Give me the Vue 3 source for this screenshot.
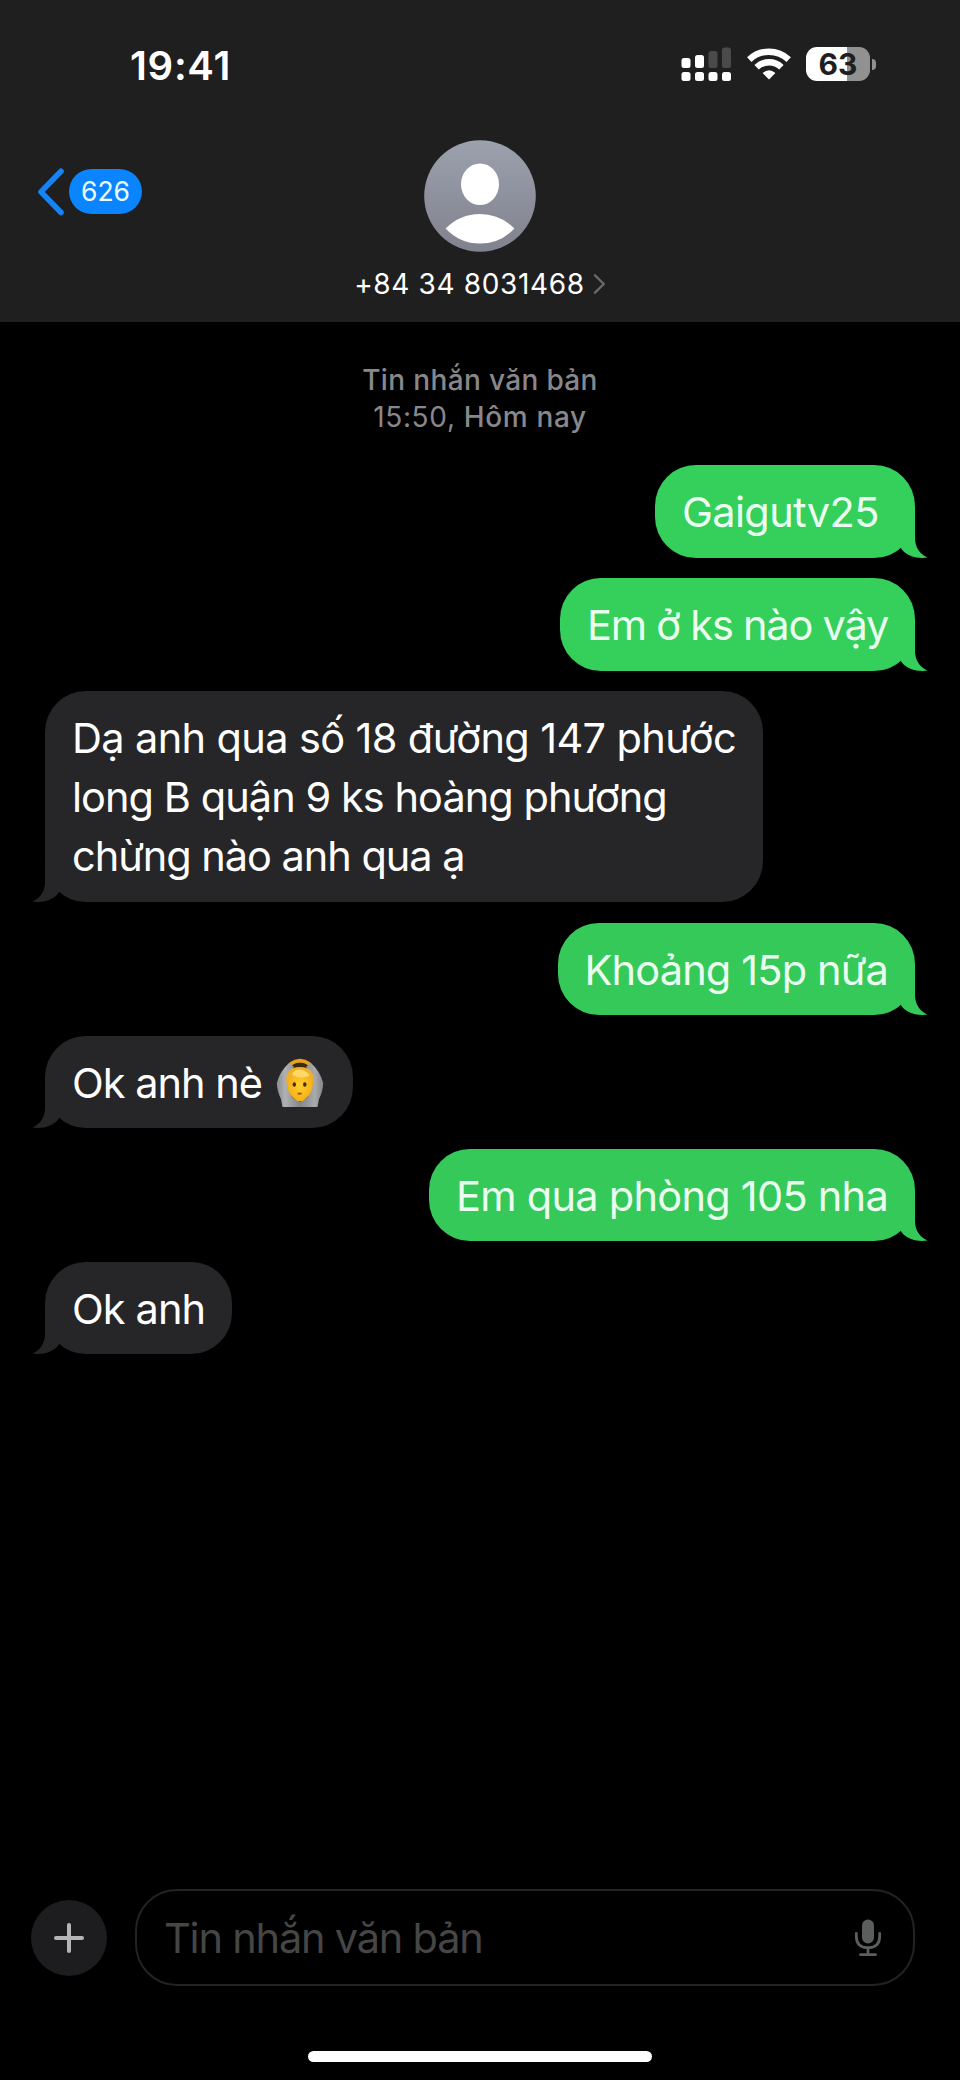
<script setup>
// `track` is the letter spacing of a line, in pixels
const messages = [
  { id: 1, side: 'out', tone: 'bright', roomy: true, lines: [{ text: 'Gaigutv25', track: -0.65 }] },
  { id: 2, side: 'out', tone: 'bright', lines: [{ text: 'Em ở ks nào vậy', track: -1.22 }] },
  {
    id: 3,
    side: 'in',
    lines: [
      { text: 'Dạ anh qua số 18 đường 147 phước', track: -0.63 },
      { text: 'long B quận 9 ks hoàng phương', track: -0.95 },
      { text: 'chừng nào anh qua ạ', track: -1.04 }
    ]
  },
  { id: 4, side: 'out', tone: 'deep', lines: [{ text: 'Khoảng 15p nữa', track: -0.85 }] },
  { id: 5, side: 'in', emoji: true, lines: [{ text: 'Ok anh nè', track: -1 }] },
  { id: 6, side: 'out', tone: 'deep', lines: [{ text: 'Em qua phòng 105 nha', track: -0.74 }] },
  { id: 7, side: 'in', lines: [{ text: 'Ok anh', track: -0.9 }] }
]
</script>

<template>
  <div class="phone">
    <header class="header">
      <div class="status">
        <span class="clock">19:41</span>
        <div class="indicators">
          <svg class="signal" width="50" height="34" viewBox="0 0 50 34">
            <g fill="#fff">
              <rect x="0.5" y="11" width="9" height="10" rx="2.5" />
              <rect x="14" y="8" width="9" height="13" rx="2.5" />
              <rect x="0.5" y="25" width="9" height="9" rx="2.5" />
              <rect x="14" y="25" width="9" height="9" rx="2.5" />
              <rect x="27.5" y="25" width="9" height="9" rx="2.5" />
              <rect x="41" y="25" width="9" height="9" rx="2.5" />
            </g>
            <g fill="#4a4a4a">
              <rect x="27.5" y="4" width="9" height="17" rx="2.5" />
              <rect x="41" y="0.5" width="9" height="20.5" rx="2.5" />
            </g>
          </svg>
          <svg class="wifi" width="44" height="32" viewBox="0 0 44 32">
            <g fill="none" stroke="#fff" stroke-width="6.4">
              <path d="M2.3 11.6 A28.5 28.5 0 0 1 41.7 11.6" />
              <path d="M9.6 19.2 A18 18 0 0 1 34.4 19.2" />
            </g>
            <path d="M22 31.5 L15.6 25 Q22 19.4 28.4 25 Z" fill="#fff" />
          </svg>
          <div class="battery">
            <div class="cell">63</div>
            <i class="nub"></i>
          </div>
        </div>
      </div>
      <div class="nav">
        <div class="back">
          <svg width="28" height="50" viewBox="0 0 28 50">
            <path d="M24 4.2 L4 24.9 L24 45.5" fill="none" stroke="#1583f5" stroke-width="5.6" stroke-linecap="round" stroke-linejoin="round" />
          </svg>
          <span class="badge">626</span>
        </div>
        <div class="contact">
          <svg width="112" height="112" viewBox="0 0 112 112">
            <defs>
              <linearGradient id="avatar" x1="0" y1="0" x2="0" y2="1">
                <stop offset="0" stop-color="#9ca1ae" />
                <stop offset="1" stop-color="#80828d" />
              </linearGradient>
            </defs>
            <circle cx="56" cy="56" r="55.8" fill="url(#avatar)" />
            <ellipse cx="56" cy="44.3" rx="19" ry="20.8" fill="#fff" />
            <path d="M21.6 88.5 Q36 74 56 74 Q76 74 90.4 88.5 Q76 103.6 56 103.6 Q36 103.6 21.6 88.5 Z" fill="#fff" />
          </svg>
          <div class="number">
            <span>+84 34 8031468</span>
            <svg width="13" height="20" viewBox="0 0 13 20"><path d="M2 1.4 L10.8 10 L2 18.6" fill="none" stroke="#69696c" stroke-width="2.4" stroke-linecap="round" stroke-linejoin="round" /></svg>
          </div>
        </div>
      </div>
    </header>

    <main class="thread">
      <div class="stamp">
        <div class="kind">Tin nhắn văn bản</div>
        <div class="when"><i>15:50,</i> Hôm nay</div>
      </div>
      <div v-for="msg in messages" :key="msg.id" class="bubble" :class="[msg.side, msg.tone, { roomy: msg.roomy, long: msg.lines.length > 1 }]">
        <div v-for="line in msg.lines" :key="line.text" class="row">
          <span class="line" :style="{ letterSpacing: line.track + 'px' }">{{ line.text }}</span>
          <svg v-if="msg.emoji" class="emoji" role="img" aria-label="🙆" width="48" height="50" viewBox="0 0 48 50">
            <defs>
              <linearGradient id="sleeve" x1="0" y1="0" x2="1" y2="0">
                <stop offset="0" stop-color="#8a8b8f" />
                <stop offset="0.18" stop-color="#b0b1b4" />
                <stop offset="0.5" stop-color="#85868a" />
                <stop offset="0.82" stop-color="#a9aaad" />
                <stop offset="1" stop-color="#838488" />
              </linearGradient>
              <radialGradient id="skin" cx="0.5" cy="0.5" r="0.55">
                <stop offset="0" stop-color="#ffd02f" />
                <stop offset="1" stop-color="#f2ad17" />
              </radialGradient>
            </defs>
            <path d="M15 10 L24 2.500 L33 10 Z" fill="#3d2a06" />
            <path d="M15 5.800 Q19 2.800 24 2.600 Q29 2.800 33 5.800" fill="none" stroke="#e5a31c" stroke-width="3.600" stroke-linejoin="round" stroke-linecap="round" />
            <path d="M13.500 4.600 L18 9 Q11 17 11.500 25 Q12 34 17 40 L24 44 L31 40 Q36 34 36.500 25 Q37 17 30 9 L34.500 4.600 Q44 13 47.200 25 Q47 33 43 41 L41.500 49 H6.500 L5 41 Q1 33 0.800 25 Q4 13 13.500 4.600 Z" fill="url(#sleeve)" />
            <path d="M11 22 Q10.500 35 18 40.500 Q24 46.500 30 40.500 Q37.500 35 37 22 Q36 11 24 11 Q12 11 11 22 Z" fill="url(#skin)" />
            <path d="M10.300 25 Q9 9 24 9 Q39 9 37.700 25 L36 26 Q36 21 34 18.500 Q24 20.500 16.500 16.500 Q12.500 19 12 26 Z" fill="#eeb02a" />
            <path d="M16 16.500 Q23 21.500 33.500 18 Q31 12 23 11.500 Q17.500 12 16 16.500 Z" fill="#ffd868" />
            <ellipse cx="18.300" cy="26.500" rx="1.700" ry="2.200" fill="#4b2c06" />
            <ellipse cx="28.800" cy="26.500" rx="1.700" ry="2.200" fill="#4b2c06" />
            <ellipse cx="23.600" cy="35.600" rx="2.400" ry="1.200" fill="#a8560e" />
          </svg>
        </div>
        <svg class="tail" width="28" height="40" viewBox="0 0 28 40">
          <path d="M0 0 H15 V20 C15 29 19.500 36 27.500 39.500 C18 41 7 38.500 1.500 31 L0 28 Z" fill="currentColor" />
        </svg>
      </div>
    </main>

    <footer class="composer">
      <div class="bar">
        <button class="plus" aria-label="+">
          <svg width="30" height="30" viewBox="0 0 30 30"><path d="M15 2 V28 M2 15 H28" stroke="#b5b5b7" stroke-width="4" stroke-linecap="round" /></svg>
        </button>
        <div class="field">
          <span>Tin nhắn văn bản</span>
          <svg width="28" height="38" viewBox="0 0 28 38">
            <rect x="8" y="0.500" width="12" height="24" rx="6" fill="#5c5e5e" />
            <path d="M2.300 14.500 V17 Q2.300 28.700 14 28.700 Q25.700 28.700 25.700 17 V14.500 M14 29 V35 M6.500 35.700 H21.500" fill="none" stroke="#5c5e5e" stroke-width="2.800" stroke-linecap="round" />
          </svg>
        </div>
      </div>
      <div class="home"></div>
    </footer>
  </div>
</template>

<style>
body { background: #000; }
</style>

<style scoped>
* { box-sizing: border-box; }
.phone { width: 960px; height: 2080px; background: #000; color: #fff; font-family: Inter, "Liberation Sans", sans-serif; display: flex; flex-direction: column; overflow: hidden; white-space: nowrap; }
.header { height: 322px; flex: none; background: #1f1f1f; }
.status { display: flex; justify-content: space-between; height: 140px; padding: 47px 84px 0 130px; }
.clock { font-size: 40px; font-weight: 600; line-height: 38px; letter-spacing: 0.7px; }
.indicators { display: flex; height: 34px; }
.wifi { margin: 1px 0 0 16px; }
.battery { display: flex; align-items: center; margin-left: 15px; }
.cell { width: 64px; height: 34px; border-radius: 11px; background: linear-gradient(90deg, #fff 41px, #919191 41px); color: #1f1f1f; font-size: 30px; font-weight: 700; line-height: 34px; text-align: center; }
.nub { width: 4px; height: 11px; margin-left: 2px; border-radius: 0 5px 5px 0; background: #919191; }
.nav { display: grid; grid-template-columns: 1fr auto 1fr; }
.back { display: flex; align-items: center; gap: 4px; height: 49px; margin: 27px 0 0 37px; }
.badge { width: 73px; height: 45px; border-radius: 22.5px; background: #0b84ff; color: #e8ffff; font-size: 26.5px; line-height: 44px; text-align: center; }
.contact { display: flex; flex-direction: column; align-items: center; }
.number { display: flex; align-items: center; gap: 8px; height: 34px; margin-top: 15px; font-size: 28px; line-height: 34px; letter-spacing: 0.65px; }
.thread { flex: 1; display: flex; flex-direction: column; gap: 20.5px; padding: 40px 45px 0; }
.stamp { height: 82.5px; text-align: center; font-size: 28px; line-height: 37.2px; font-weight: 500; color: #88888c; }
.stamp i { font-style: normal; font-weight: 400; }
.kind { letter-spacing: 0.35px; }
.when { letter-spacing: 0.65px; }
.bubble { position: relative; height: 92.5px; padding: 17.9px 27px 0; border-radius: 41px; font-size: 41.5px; line-height: 59px; }
.long { height: 211.3px; }
.row { display: flex; align-items: center; height: 59px; }
.in { align-self: flex-start; background: #262628; color: #262628; }
.in .line { color: #fff; }
.out { align-self: flex-end; background: currentColor; }
.out .line { color: #eafff0; }
.bright { color: #35cf5b; }
.deep { color: #35c95a; }
.roomy { min-width: 260px; }
.tail { position: absolute; right: -13px; bottom: 0; }
.in .tail { right: auto; left: -13px; transform: scaleX(-1); }
.emoji { margin: 0 2px 0 14px; }
.composer { height: 191px; flex: none; }
.bar { display: flex; align-items: center; gap: 28px; padding: 0 45px 0 31px; height: 97px; }
.plus { width: 76px; height: 76px; border: 0; border-radius: 50%; background: #1d1d1f; display: flex; align-items: center; justify-content: center; padding: 0; }
.field { flex: 1; height: 97px; border: 2px solid #222323; border-radius: 42px; display: flex; align-items: center; justify-content: space-between; padding: 0 31px 0 27px; font-size: 41.5px; letter-spacing: -1.2px; color: #464646; }
.home { width: 344px; height: 11px; border-radius: 6px; background: #fff; margin: 65px auto 0; }
</style>
